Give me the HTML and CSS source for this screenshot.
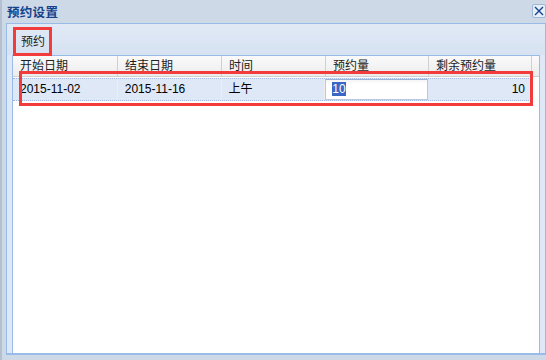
FILE: index.html
```html
<!DOCTYPE html>
<html lang="zh">

<head>
    <meta charset="UTF-8">
    <title>预约设置</title>
    <link rel="stylesheet" href="styles.css">
</head>

<body>
    <div class="win">
        <div class="win-head">
            <span class="win-title">预约设置</span>
            <span class="win-close">
                <svg width="10" height="10" viewBox="0 0 10 10">
                    <path d="M1 1 L9 9 M9 1 L1 9" stroke="#15428b" stroke-width="1.4" fill="none"/>
                </svg>
            </span>
        </div>
        <div class="win-body">
            <div class="tbar">
                <button class="btn">预约</button>
            </div>
            <div class="grid">
                <div class="grid-head">
                    <div class="hcell c1">开始日期</div>
                    <div class="hcell c2">结束日期</div>
                    <div class="hcell c3">时间</div>
                    <div class="hcell c4">预约量</div>
                    <div class="hcell c5">剩余预约量</div>
                    <div class="hfill"></div>
                </div>
                <div class="grid-row">
                    <div class="cell c1">2015-11-02</div>
                    <div class="cell c2">2015-11-16</div>
                    <div class="cell c3">上午</div>
                    <div class="cell c4 edit"><span class="editor"><span class="sel">10</span></span></div>
                    <div class="cell c5 num">10</div>
                </div>
            </div>
        </div>
        <!-- annotation boxes -->
        <div class="mark mark-btn"></div>
        <div class="mark mark-row"></div>
    </div>
</body>

</html>
```

FILE: styles.css
```css
body {
    margin: 0;
    font-family: "Liberation Sans", "Noto Sans CJK SC", sans-serif;
    font-size: 12px;
    color: #000;
}

.win {
    position: relative;
    width: 546px;
    height: 360px;
    box-sizing: border-box;
    background-color: #cdd9e7;
    border-left: 2px solid #b4c0cf;
    display: flex;
    flex-direction: column;
    padding: 0 0 5px 4px;
}

.win-head {
    height: 23px;
    display: flex;
    align-items: center;
    justify-content: space-between;
    padding-left: 1px;
}

.win-title {
    font-weight: bold;
    font-size: 12.5px;
    color: #15428b;
    letter-spacing: 0.3px;
}

.win-close {
    width: 12px;
    height: 12px;
    border: 1px solid #9fb6d6;
    border-radius: 2px;
    background-color: #e6eef8;
    display: flex;
    align-items: center;
    justify-content: center;
    margin-top: -2px;
}

.win-body {
    flex: 1;
    display: flex;
    flex-direction: column;
    border: 1px solid #99bbe8;
    border-bottom-width: 2px;
    background-color: #dfe8f6;
    padding: 0 5px 0 5px;
}

.tbar {
    height: 31px;
    display: flex;
    align-items: center;
    background: linear-gradient(#e1e9f5, #d6e2f2);
    margin: 0 -5px;
    padding-left: 8px;
}

.btn {
    font-family: inherit;
    font-size: 12px;
    color: #222;
    background: none;
    border: none;
    padding: 2px 6px 0;
}

.grid {
    flex: 1;
    background-color: #fff;
    border: 1px solid #99bbe8;
    border-bottom: none;
}

.grid-head {
    display: flex;
    height: 20px;
    background: linear-gradient(#fafafa, #ececec);
    border-bottom: 1px solid #d0d0d0;
}

.hcell,
.cell {
    box-sizing: border-box;
    padding-left: 7px;
    line-height: 21px;
}

.hcell {
    border-right: 1px solid #d0d0d0;
    color: #222;
}

.c1 {
    width: 105px;
}

.c2,
.c3 {
    width: 104px;
}

.c4,
.c5 {
    width: 103px;
}

.hfill {
    flex: 1;
}

.grid-row {
    display: flex;
    height: 21px;
    margin-top: 1px;
    width: 518px;
    background-color: #dfe8f6;
    border-top: 1px dotted #a3bae9;
    border-bottom: 1px dotted #a3bae9;
}

.cell {
    border-right: 1px solid #ededed;
}

.cell.edit {
    padding: 0;
    border-right: none;
}

.editor {
    display: block;
    height: 21px;
    width: 103px;
    box-sizing: border-box;
    border: 1px solid #b5c9e6;
    border-top-color: #9cb3d6;
    background: linear-gradient(#f4f4f4, #fff 4px);
    padding: 2px 0 0 6px;
    line-height: 15px;
}

.sel {
    background-color: #3967c3;
    color: #fff;
}

.cell.num {
    border-right: none;
    text-align: right;
    padding-right: 6px;
}

.mark {
    position: absolute;
    border: 3px solid #f23b3b;
    box-sizing: border-box;
}

.mark-btn {
    left: 11px;
    top: 27px;
    width: 39px;
    height: 29px;
}

.mark-row {
    left: 17px;
    top: 71px;
    width: 514px;
    height: 35px;
}
```
